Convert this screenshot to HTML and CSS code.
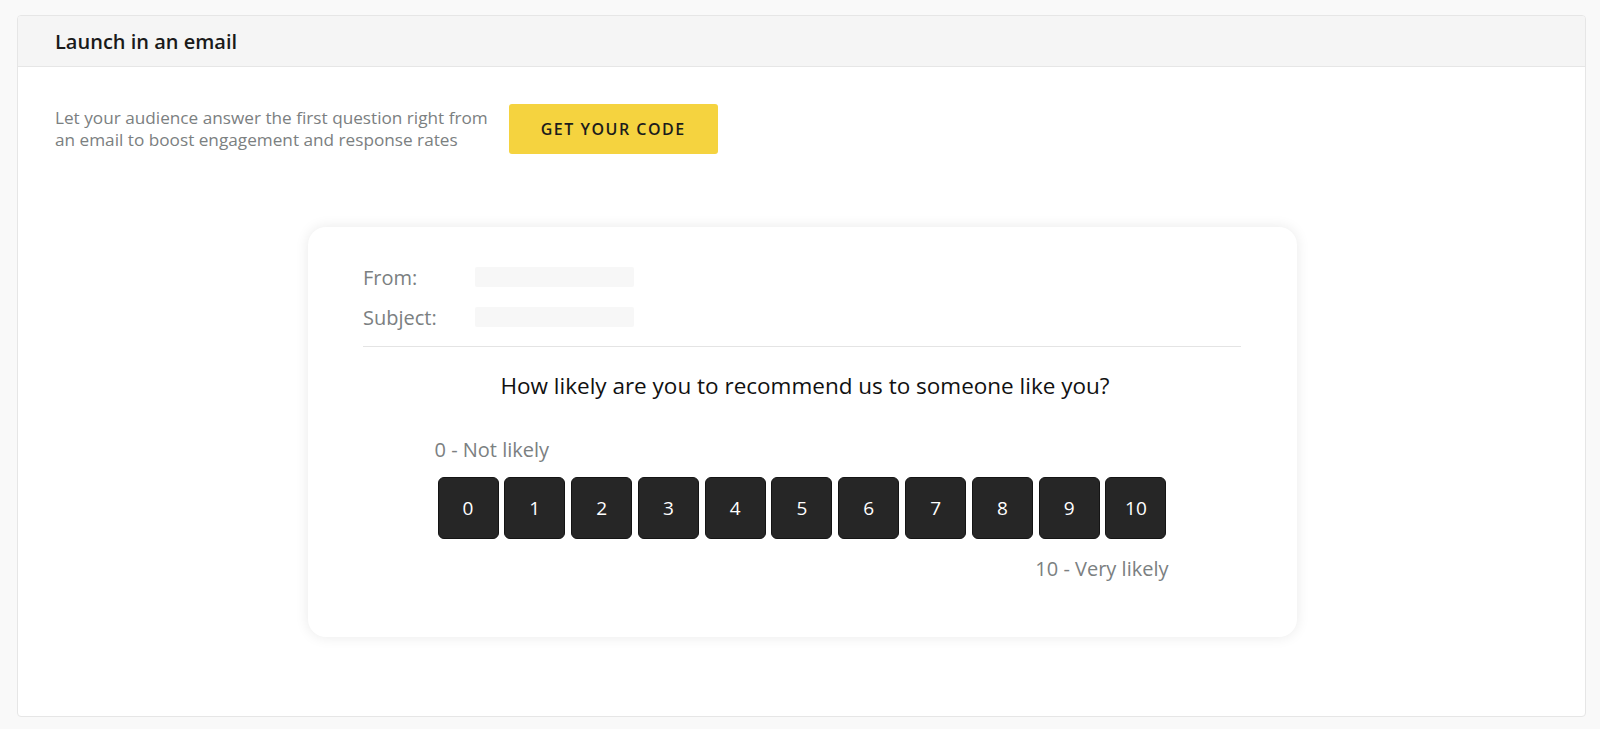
FILE: index.html
```html
<!DOCTYPE html>
<html>
<head>
<meta charset="utf-8">
<link rel="stylesheet" href="styles.css">
</head>
<body>
<section class="panel">
  <header class="panel-head">Launch in an email</header>
  <div class="panel-body">
    <div class="intro">
      <p class="intro-text">Let your audience answer the first question right from<br>an email to boost engagement and response rates</p>
      <button class="code-btn">GET YOUR CODE</button>
    </div>
    <div class="email-card">
      <div class="meta-row"><span class="meta-label">From:</span><span class="meta-bar"></span></div>
      <div class="meta-row"><span class="meta-label">Subject:</span><span class="meta-bar"></span></div>
      <div class="divider"></div>
      <p class="question">How likely are you to recommend us to someone like you?</p>
      <div class="scale">
        <div class="scale-low">0 - Not likely</div>
        <div class="scale-row">
          <span class="score">0</span><span class="score">1</span><span class="score">2</span><span class="score">3</span><span class="score">4</span><span class="score">5</span><span class="score">6</span><span class="score">7</span><span class="score">8</span><span class="score">9</span><span class="score">10</span>
        </div>
        <div class="scale-high">10 - Very likely</div>
      </div>
    </div>
  </div>
</section>
</body>
</html>
```
FILE: styles.css
```css
html, body {
  margin: 0;
  padding: 0;
}
body {
  background: #f9f9f9;
  font-family: "Open Sans", "Liberation Sans", sans-serif;
  color: #1b1b1b;
  padding: 15px 14px 12px 17px;
}
.panel {
  background: #fff;
  border: 1px solid #e6e6e6;
  border-radius: 4px;
  height: 702px;
  box-sizing: border-box;
  overflow: hidden;
}
.panel-head {
  background: #f5f5f5;
  border-bottom: 1px solid #e6e6e6;
  height: 51px;
  box-sizing: border-box;
  padding-left: 37px;
  display: flex;
  align-items: center;
  font-size: 20px;
  font-weight: 600;
  color: #1a1a1a;
}
.panel-body {
  padding: 37px 37px 0 37px;
}
.intro {
  display: flex;
  align-items: center;
  gap: 21px;
}
.intro-text {
  margin: 0;
  font-size: 17.2px;
  line-height: 22px;
  color: #7b8081;
}
.code-btn {
  background: #f5d33f;
  border: none;
  border-radius: 3px;
  width: 209px;
  height: 50px;
  font-family: "Open Sans", "Liberation Sans", sans-serif;
  font-size: 16px;
  font-weight: 600;
  letter-spacing: 1.5px;
  color: #1c1c1c;
  padding: 0;
}
.email-card {
  width: 989px;
  height: 410px;
  box-sizing: border-box;
  margin: 73px 0 0 253px;
  background: #fff;
  border-radius: 18px;
  box-shadow: 0 0 14px rgba(0, 0, 0, 0.09);
  padding: 40px 56px 0 55px;
}
.meta-row {
  display: flex;
  align-items: center;
  height: 20px;
  margin-bottom: 20px;
}
.meta-label {
  width: 112px;
  font-size: 20px;
  color: #7b8081;
}
.meta-bar {
  width: 159px;
  height: 20px;
  background: #f7f7f7;
  border-radius: 2px;
}
.divider {
  height: 1px;
  background: #e4e4e4;
  margin-top: -1px;
}
.question {
  margin: 24px 0 0;
  padding-left: 6px;
  text-align: center;
  font-size: 22.5px;
  line-height: 30px;
  color: #111;
}
.scale {
  width: 729px;
  margin: 37px auto 0;
}
.scale-low, .scale-high {
  font-size: 20px;
  line-height: 24px;
  color: #7b8081;
}
.scale-low {
  margin-left: -3px;
}
.scale-high {
  text-align: right;
  margin-top: 18px;
  margin-right: -2px;
}
.scale-row {
  display: flex;
  justify-content: space-between;
  margin-top: 15px;
}
.score {
  width: 61px;
  height: 62px;
  box-sizing: border-box;
  background: #262626;
  border: 1px solid #141414;
  border-radius: 6px;
  color: #fff;
  font-size: 19px;
  display: flex;
  align-items: center;
  justify-content: center;
}
```
